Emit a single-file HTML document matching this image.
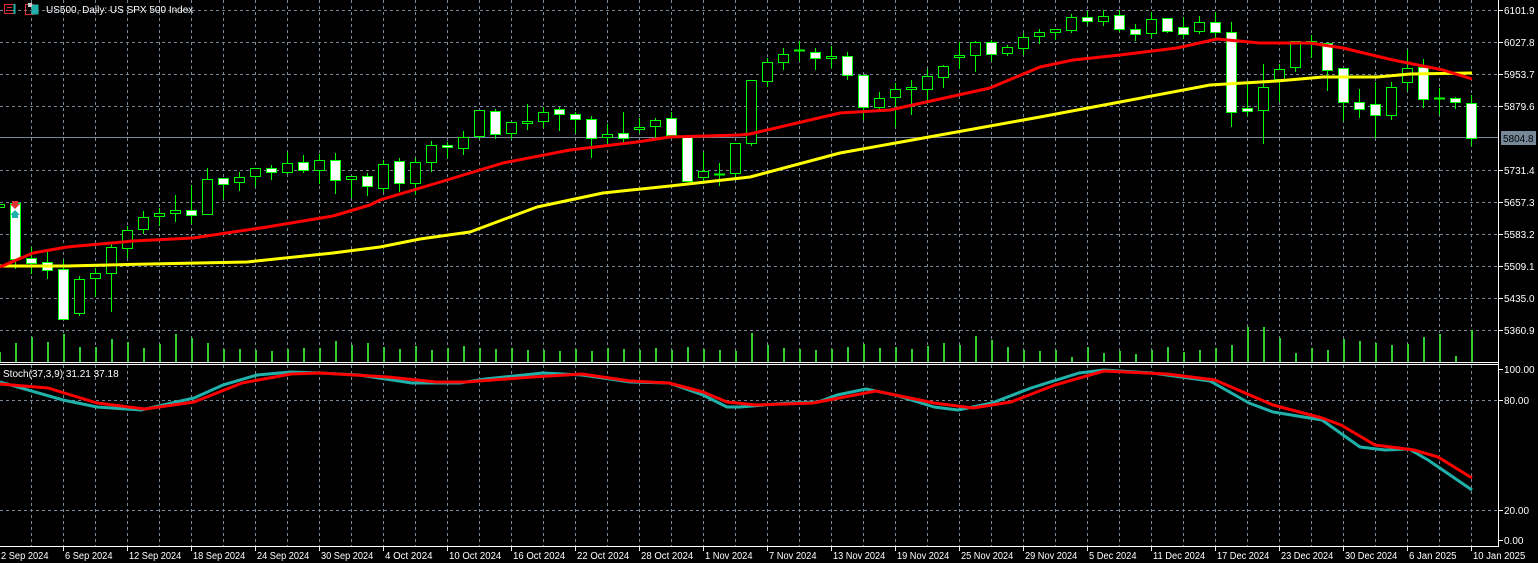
<!DOCTYPE html>
<html><head><meta charset="utf-8">
<style>
html,body{margin:0;padding:0;background:#000;width:1538px;height:563px;overflow:hidden}
svg{display:block}
text{font-family:"Liberation Sans","DejaVu Sans",sans-serif;font-size:10px;fill:#fff}
</style></head><body>
<svg id="s" width="1538" height="563" xmlns="http://www.w3.org/2000/svg">
<rect width="1538" height="563" fill="#000"/>
<g id="grid" stroke="#778899" stroke-width="1" stroke-dasharray="3,3" fill="none"></g>
<line x1="0" y1="137.5" x2="1498" y2="137.5" stroke="#778899" stroke-width="1"/>
<g id="vol" stroke="#32cd32" stroke-width="2"></g>
<g id="candles"></g>
<polyline id="yel" fill="none" stroke="#ffff00" stroke-width="3" stroke-linejoin="round"/>
<polyline id="red" fill="none" stroke="#ff0000" stroke-width="3" stroke-linejoin="round"/>
<polyline id="sc" fill="none" stroke="#20b2aa" stroke-width="3" stroke-linejoin="round"/>
<polyline id="sr" fill="none" stroke="#ff0000" stroke-width="3" stroke-linejoin="round"/>
<g stroke="#fff" stroke-width="1">
<line x1="0" y1="362.5" x2="1498" y2="362.5"/>
<line x1="0" y1="364.5" x2="1498" y2="364.5"/>
<line x1="0" y1="546.5" x2="1498" y2="546.5"/>
<line x1="1498.5" y1="0" x2="1498.5" y2="547"/>
</g>
<g id="axis"></g>
<g id="dates"></g>
<!-- arrows at bar 1 -->
<path d="M12 201h6v3h2l-5 5-5-5h2z" fill="#e03030"/>
<path d="M15 210l5 5h-2v3h-6v-3h-2z" fill="#20b2aa"/>
<!-- title icons -->
<rect x="4.5" y="4.5" width="10" height="9" fill="none" stroke="#e03030"/>
<line x1="7" y1="7.5" x2="12" y2="7.5" stroke="#e03030"/><line x1="7" y1="10.5" x2="12" y2="10.5" stroke="#e03030"/>
<line x1="14.5" y1="4" x2="14.5" y2="14" stroke="#20b2aa" stroke-width="2"/>
<rect x="25.5" y="4.5" width="8" height="10" fill="none" stroke="#e03030"/>
<rect x="31.5" y="4.5" width="7" height="10" fill="#20b2aa"/>
<rect x="28" y="3" width="4" height="4" fill="#ccc"/>
<text x="46" y="13">US500, Daily:  US SPX 500 Index</text>
<text x="3" y="377">Stoch(37,3,9) 31.21 37.18</text>
</svg>
<script>
var NS="http://www.w3.org/2000/svg";
function el(p,t,a,txt){var e=document.createElementNS(NS,t);for(var k in a)e.setAttribute(k,a[k]);if(txt!=null)e.textContent=txt;p.appendChild(e);return e;}
var g=document.getElementById('grid');
for(var x=31;x<=1471;x+=32){el(g,'line',{x1:x+.5,y1:0,x2:x+.5,y2:362});el(g,'line',{x1:x+.5,y1:365,x2:x+.5,y2:546});}
[10,42,74,106,170,202,234,266,298,330].forEach(function(y){el(g,'line',{x1:0,y1:y+.5,x2:1498,y2:y+.5});});
[400,510].forEach(function(y){el(g,'line',{x1:0,y1:y+.5,x2:1498,y2:y+.5});});
// candles: [oTop,oBot,wTop,wBot,white]
var C=[[204,207,204,207,0],[203,259,203,268,1],[258,263,247,273,1],[262,270,251,278,1],[269,319,260,319,1],[279,313,276,315,0],[273,278,268,296,0],[247,273,244,311,0],[230,248,226,257,0],[217,229,211,233,0],[213,216,208,225,0],[210,213,195,221,0],[210,215,185,223,1],[179,214,168,214,0],[178,184,178,198,1],[177,182,172,190,0],[168,176,168,186,0],[168,172,165,179,1],[163,172,152,173,0],[162,170,155,172,1],[160,170,154,183,0],[160,180,153,193,1],[176,179,176,197,0],[176,186,173,195,1],[164,188,160,191,0],[161,183,158,191,1],[162,183,158,194,0],[145,162,141,171,0],[145,147,142,157,1],[137,148,131,154,0],[110,136,110,138,0],[111,134,109,138,1],[122,133,122,138,0],[121,123,104,129,0],[112,121,107,127,0],[109,114,107,130,1],[114,119,112,132,1],[119,138,116,157,1],[134,137,124,145,0],[133,138,112,142,1],[127,129,118,132,0],[120,126,118,138,0],[118,135,112,137,1],[137,181,135,181,1],[171,177,152,183,0],[174,174,163,185,2],[143,173,143,177,0],[80,143,80,145,0],[62,81,58,86,0],[54,62,48,69,0],[50,50,41,60,2],[52,58,48,69,1],[56,58,46,67,0],[56,75,52,79,1],[75,107,75,119,1],[98,107,92,109,0],[89,97,83,126,0],[87,89,80,114,0],[76,89,69,103,0],[66,77,65,87,0],[55,57,42,68,0],[42,55,41,71,0],[42,54,40,60,1],[47,53,45,55,0],[37,48,33,54,0],[32,36,29,43,0],[29,32,29,39,0],[17,30,14,32,0],[17,21,11,24,1],[16,21,10,25,0],[15,29,10,31,1],[29,34,24,40,1],[19,33,12,37,0],[18,31,18,32,1],[27,34,17,38,1],[22,31,16,33,0],[22,32,12,38,1],[32,112,22,126,1],[108,111,83,115,1],[87,110,64,143,0],[69,79,64,101,0],[41,67,41,71,0],[41,43,35,57,0],[43,70,43,90,1],[68,102,68,120,1],[102,109,89,117,1],[104,115,82,137,1],[87,115,82,119,0],[68,82,50,90,0],[67,99,59,107,1],[98,98,88,114,2],[98,102,97,108,1],[103,138,95,145,1]];
var cg=document.getElementById('candles');
C.forEach(function(c,i){var cx=-1+16*i;
 el(cg,'line',{x1:cx+.5,y1:c[2],x2:cx+.5,y2:c[3]+1,stroke:'#00ff00','stroke-width':1});
 if(c[4]==2){el(cg,'line',{x1:cx-5,y1:c[0]+.5,x2:cx+6,y2:c[0]+.5,stroke:'#00ff00','stroke-width':2});}
 else el(cg,'rect',{x:cx-4.5,y:c[0]+.5,width:10,height:Math.max(1,c[1]-c[0]),fill:c[4]?'#fff':'#000',stroke:'#00ff00','stroke-width':1});
});
var V=[352,343,337,342,334,347,347,339,342,348,344,334,338,343,349,349,350,351,349,348,348,341,345,343,347,349,346,350,348,346,348,349,348,350,350,351,349,351,348,349,350,348,350,347,349,350,351,333,345,348,349,350,349,347,344,348,347,349,346,343,345,336,340,347,350,351,350,357,347,353,351,354,350,347,352,350,348,345,327,327,338,353,348,350,339,341,343,345,344,337,334,356,330];
var vg=document.getElementById('vol');
V.forEach(function(t,i){var cx=-1+16*i;el(vg,'line',{x1:cx+1,y1:t,x2:cx+1,y2:362});});
function pl(id,p){document.getElementById(id).setAttribute('points',p.map(function(a){return a.join(',')}).join(' '));}
pl('red',[[0,267],[33,253],[67,247],[133,241],[193,238],[267,227],[333,216],[370,205],[380,200],[437,183],[503,163],[570,150],[637,142],[670,137],[740,135],[750,134],[840,113],[890,110],[990,88],[1040,67],[1073,60],[1120,55],[1177,48],[1217,39],[1260,43],[1310,43],[1343,48],[1393,60],[1443,70],[1472,79]]);
pl('yel',[[0,266],[67,266],[150,264],[247,262],[333,253],[380,247],[420,239],[470,232],[537,207],[603,193],[670,186],[750,177],[840,153],[940,135],[1040,117],[1120,102],[1210,85],[1277,81],[1323,77],[1377,77],[1410,74],[1472,73]]);
pl('sc',[[0,382],[63,400],[97,407],[141,410],[194,398],[223,385],[257,375],[291,372],[320,373],[359,375],[412,383],[460,383],[485,379],[543,373],[582,375],[630,382],[669,383],[703,395],[727,407],[740,407],[788,403],[818,402],[837,395],[866,389],[895,395],[934,407],[958,410],[992,403],[1031,388],[1079,373],[1104,370],[1152,373],[1210,381],[1249,403],[1273,412],[1322,420],[1360,447],[1385,450],[1409,449],[1428,460],[1472,490]]);
pl('sr',[[0,384],[48,388],[97,403],[145,409],[194,402],[242,383],[291,374],[320,373],[388,377],[436,382],[466,382],[533,377],[582,374],[630,381],[669,383],[703,392],[727,402],[756,405],[813,403],[876,391],[934,403],[973,408],[1011,402],[1055,385],[1104,371],[1167,374],[1215,380],[1273,405],[1322,418],[1341,425],[1375,445],[1414,450],[1438,457],[1472,478]]);
var ax=document.getElementById('axis');
[['6101.9',10],['6027.8',42],['5953.7',74],['5879.6',106],['5731.4',170],['5657.3',202],['5583.2',234],['5509.1',266],['5435.0',298],['5360.9',330],['100.00',369],['80.00',400],['20.00',510],['0.00',540]].forEach(function(a){
 el(ax,'line',{x1:1499,y1:a[1]+.5,x2:1503,y2:a[1]+.5,stroke:'#fff'});
 el(ax,'text',{x:1504,y:a[1]+4},a[0]);});
el(ax,'rect',{x:1501,y:131,width:35,height:14,fill:'#778899'});
el(ax,'text',{x:1503,y:142,style:'fill:#000'},'5804.8');
var D=['2 Sep 2024','6 Sep 2024','12 Sep 2024','18 Sep 2024','24 Sep 2024','30 Sep 2024','4 Oct 2024','10 Oct 2024','16 Oct 2024','22 Oct 2024','28 Oct 2024','1 Nov 2024','7 Nov 2024','13 Nov 2024','19 Nov 2024','25 Nov 2024','29 Nov 2024','5 Dec 2024','11 Dec 2024','17 Dec 2024','23 Dec 2024','30 Dec 2024','6 Jan 2025','10 Jan 2025'];
var dg=document.getElementById('dates');
D.forEach(function(d,i){var x=-1+64*i;if(i==23)x=1471;
 el(dg,'line',{x1:x+.5,y1:547,x2:x+.5,y2:551,stroke:'#fff'});
 el(dg,'text',{x:x+2,y:559,textLength:d.length*4.75,lengthAdjust:'spacingAndGlyphs'},d);});
</script>
</body></html>
